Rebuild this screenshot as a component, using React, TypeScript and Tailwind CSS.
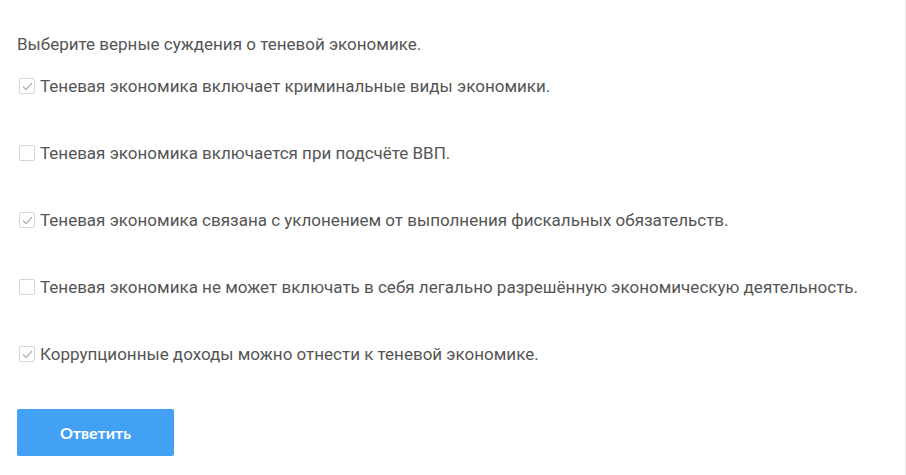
const options = [
  { text: 'Теневая экономика включает криминальные виды экономики.', checked: true },
  { text: 'Теневая экономика включается при подсчёте ВВП.', checked: false },
  { text: 'Теневая экономика связана с уклонением от выполнения фискальных обязательств.', checked: true },
  { text: 'Теневая экономика не может включать в себя легально разрешённую экономическую деятельность.', checked: false },
  { text: 'Коррупционные доходы можно отнести к теневой экономике.', checked: true },
]

function Checkbox({ checked }: { checked: boolean }) {
  return (
    <span className="w-[16px] h-[16px] border border-[#d6d6d6] rounded-[2px] bg-white flex items-center justify-center shrink-0">
      {checked && (
        <svg width="11" height="9" viewBox="0 0 11 9" fill="none">
          <path d="M1 4.5 L4 7.5 L10 1" stroke="#b5b5b5" strokeWidth="1.3" />
        </svg>
      )}
    </span>
  )
}

export default function App() {
  return (
    <div className="w-[906px] h-[475px] bg-white border-r border-[#ececec] font-['Roboto',sans-serif] text-[#555555]">
      <div className="pt-[34px] pl-[17px]">
        <p className="text-[17px] leading-[20px]">Выберите верные суждения о теневой экономике.</p>
        <div className="mt-[22px] flex flex-col gap-[47px]">
          {options.map((o) => (
            <label key={o.text} className="flex items-center gap-[5px] pl-[2px] h-[20px]">
              <Checkbox checked={o.checked} />
              <span className="text-[17px] leading-[20px]">{o.text}</span>
            </label>
          ))}
        </div>
        <button className="mt-[45px] w-[157px] h-[47px] bg-[#42a1f5] rounded-[2px] text-white text-[16px] font-bold font-['Lato',sans-serif]">
          Ответить
        </button>
      </div>
    </div>
  )
}
